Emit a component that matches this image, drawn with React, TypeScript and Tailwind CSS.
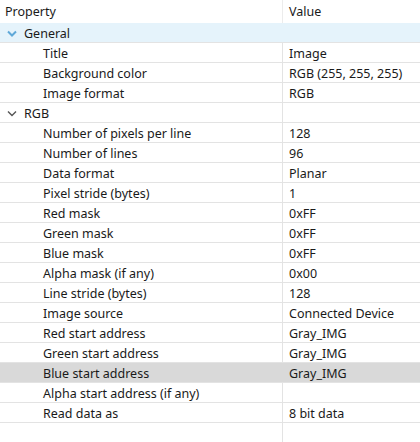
import React from "react";

type Row = { label: string; value: string; level: number; group?: boolean; bg?: string; chevron?: "blue" | "gray" };

const rows: Row[] = [
  { label: "General", value: "", level: 0, group: true, bg: "bg-[#e5f3fb]", chevron: "blue" },
  { label: "Title", value: "Image", level: 1 },
  { label: "Background color", value: "RGB (255, 255, 255)", level: 1 },
  { label: "Image format", value: "RGB", level: 1 },
  { label: "RGB", value: "", level: 0, group: true, chevron: "gray" },
  { label: "Number of pixels per line", value: "128", level: 1 },
  { label: "Number of lines", value: "96", level: 1 },
  { label: "Data format", value: "Planar", level: 1 },
  { label: "Pixel stride (bytes)", value: "1", level: 1 },
  { label: "Red mask", value: "0xFF", level: 1 },
  { label: "Green mask", value: "0xFF", level: 1 },
  { label: "Blue mask", value: "0xFF", level: 1 },
  { label: "Alpha mask (if any)", value: "0x00", level: 1 },
  { label: "Line stride (bytes)", value: "128", level: 1 },
  { label: "Image source", value: "Connected Device", level: 1 },
  { label: "Red start address", value: "Gray_IMG", level: 1 },
  { label: "Green start address", value: "Gray_IMG", level: 1 },
  { label: "Blue start address", value: "Gray_IMG", level: 1, bg: "bg-[#d9d9d9]" },
  { label: "Alpha start address (if any)", value: "", level: 1 },
  { label: "Read data as", value: "8 bit data", level: 1 },
];

function Chevron({ color }: { color: "blue" | "gray" }) {
  const stroke = color === "blue" ? "#5fa8d8" : "#555555";
  return (
    <svg width="10" height="7" viewBox="0 0 10 7" className="shrink-0">
      <path d="M1 1.5 L5 5.5 L9 1.5" fill="none" stroke={stroke} strokeWidth={color === "blue" ? 2 : 1.4} />
    </svg>
  );
}

export default function App() {
  return (
    <div
      className="w-[420px] h-[442px] bg-white text-[#1a1a1a] overflow-hidden relative"
      style={{ fontFamily: '"Noto Sans", "Open Sans", sans-serif' }}
    >
      <div className="flex h-[23px] text-[12.5px]">
        <div className="w-[283px] pl-[5px] pt-[2px] border-r border-[#ececec] h-full flex items-center">Property</div>
        <div className="flex-1 pl-[6px] pt-[2px] h-full flex items-center">Value</div>
      </div>
      {rows.map((r, i) => (
        <div key={i} className={`flex h-[20px] border-b border-[#e3e3e3] text-[12.5px] ${r.bg ?? ""}`}>
          <div className={`w-[283px] h-full flex items-center pt-[3px] ${r.group ? "pl-[7px]" : "pl-[43px]"} ${r.bg ? "" : "border-r border-[#e3e3e3]"}`}>
            {r.chevron && (
              <span className="w-[17px] flex items-center -mt-[2px]">
                <Chevron color={r.chevron} />
              </span>
            )}
            <span className="whitespace-nowrap">{r.label}</span>
          </div>
          <div className="flex-1 h-full flex items-center pt-[3px] pl-[6px] whitespace-nowrap">{r.value}</div>
        </div>
      ))}
      <div className="flex h-[40px]">
        <div className="w-[283px] h-full border-r border-[#e3e3e3]" />
      </div>
    </div>
  );
}
